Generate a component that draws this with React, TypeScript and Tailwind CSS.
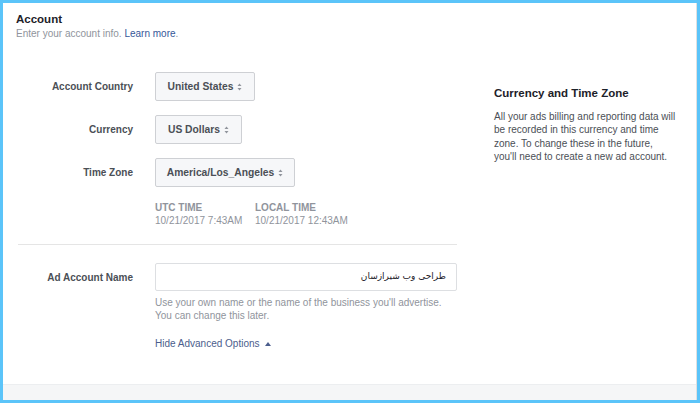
import React from "react";

const Arrows = () => (
  <svg width="5" height="8" viewBox="0 0 5 8" className="ml-[4px] inline-block">
    <path d="M2.5 0.5 L4.5 3 L0.5 3 Z" fill="#90949c" />
    <path d="M2.5 7.5 L4.5 5 L0.5 5 Z" fill="#90949c" />
  </svg>
);

const Select = ({ label, width }: { label: string; width: string }) => (
  <div className={`flex h-[29px] ${width} items-center justify-center rounded-[2px] border border-[#ced0d4] bg-[#f6f7f9] text-[10.3px] font-bold text-[#4b4f56]`}>
    {label}
    <Arrows />
  </div>
);

const Label = ({ children }: { children: React.ReactNode }) => (
  <div className="flex h-[29px] items-center justify-end text-[10px] font-bold text-[#4b4f56]">{children}</div>
);

export default function App() {
  return (
    <div className="h-[403px] w-[700px] overflow-hidden bg-[#5bc4f9] p-[3px] font-['Liberation_Sans',Arial,sans-serif]">
      <div className="flex h-full w-full flex-col border-r border-[#e0e0e0] bg-white">
        <div className="flex-1">
          <div className="pl-[13px] pt-[9px]">
            <div className="text-[11.5px] font-bold leading-[14px] text-[#1d2129]">Account</div>
            <div className="mt-[1px] text-[10px] leading-[13px] text-[#90949c]">
              Enter your account info. <span className="text-[#365899]">Learn more</span>.
            </div>
          </div>

          <div className="flex">
            <div className="w-[454px]">
              <div className="mt-[32px] grid grid-cols-[130px_1fr] gap-x-[22px] gap-y-[14px]">
                <Label>Account Country</Label>
                <Select label="United States" width="w-[100px]" />
                <Label>Currency</Label>
                <Select label="US Dollars" width="w-[87px]" />
                <Label>Time Zone</Label>
                <Select label="America/Los_Angeles" width="w-[140px]" />
              </div>

              <div className="ml-[152px] mt-[15px] flex text-[10px] leading-[12.5px] text-[#90949c]">
                <div className="w-[100px]">
                  <div className="font-bold">UTC TIME</div>
                  <div>10/21/2017 7:43AM</div>
                </div>
                <div>
                  <div className="font-bold">LOCAL TIME</div>
                  <div>10/21/2017 12:43AM</div>
                </div>
              </div>

              <div className="ml-[15px] mt-[17px] h-px bg-[#e5e5e5]" />

              <div className="mt-[18px] grid grid-cols-[130px_1fr] gap-x-[22px]">
                <div className="flex h-[28px] items-center justify-end text-[10px] font-bold text-[#4b4f56]">Ad Account Name</div>
                <div>
                  <div
                    dir="rtl"
                    className="flex h-[28px] items-center rounded-[2px] border border-[#dddfe2] bg-white pr-[10px] font-['DejaVu_Sans',sans-serif] text-[9px] text-[#1d2129]"
                  >
                    طراحی وب شیرازسان
                  </div>
                  <div className="mt-[5px] text-[10px] leading-[13px] text-[#90949c]">
                    Use your own name or the name of the business you'll advertise.
                    <br />
                    You can change this later.
                  </div>
                  <div className="mt-[15px] flex items-center text-[10px] leading-[13px] text-[#4b5d8c]">
                    Hide Advanced Options
                    <svg width="6" height="4" viewBox="0 0 6 4" className="ml-[5px]">
                      <path d="M3 0 L6 4 L0 4 Z" fill="#4b5d8c" />
                    </svg>
                  </div>
                </div>
              </div>
            </div>

            <div className="ml-[37px] mt-[46px] w-[184px]">
              <div className="text-[11.5px] font-bold leading-[14px] text-[#1d2129]">Currency and Time Zone</div>
              <div className="mt-[10px] text-[10px] leading-[13.4px] text-[#4b4f56]">
                All your ads billing and reporting data will be recorded in this currency and time zone. To change these in the future, you'll need to create a new ad account.
              </div>
            </div>
          </div>
        </div>
        <div className="h-[16px] border-t border-[#eceef0] bg-[#f5f6f7]" />
      </div>
    </div>
  );
}
